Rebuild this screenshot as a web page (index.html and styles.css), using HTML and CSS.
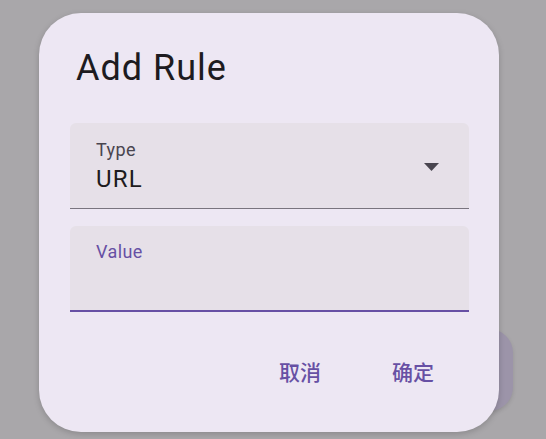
FILE: index.html
```html
<!DOCTYPE html>
<html>
<head>
<meta charset="utf-8">
<link rel="stylesheet" href="styles.css">
</head>
<body>
<div class="fab"></div>
<div class="dialog">
  <h1 class="title">Add Rule</h1>
  <div class="field field-select">
    <div class="field-text">
      <div class="label">Type</div>
      <div class="value">URL</div>
    </div>
    <svg class="caret" width="15" height="8" viewBox="0 0 15 8"><path d="M0 0 L15 0 L7.5 8 Z" fill="#49454f"/></svg>
  </div>
  <div class="field field-focused">
    <div class="label label-focused">Value</div>
  </div>
  <div class="actions">
    <button class="btn">取消</button>
    <button class="btn">确定</button>
  </div>
</div>
</body>
</html>
```

FILE: styles.css
```css
html, body {
  margin: 0;
  padding: 0;
}
body {
  width: 546px;
  height: 439px;
  background: #a9a7aa;
  font-family: Roboto, "Noto Sans CJK SC", sans-serif;
  position: relative;
  overflow: hidden;
  padding: 13px 0 0 39px;
  box-sizing: border-box;
}
.fab {
  position: absolute;
  left: 429px;
  top: 329px;
  width: 84px;
  height: 82px;
  border-radius: 24px;
  background: #9c94a9;
  box-shadow: 0 2px 4px rgba(0,0,0,0.12);
}
.dialog {
  position: relative;
  width: 460px;
  height: 419px;
  background: #ede7f3;
  border-radius: 42px;
  box-shadow: 0 2px 6px rgba(0,0,0,0.18);
  box-sizing: border-box;
  padding: 31px 30px 0 31px;
  display: flex;
  flex-direction: column;
}
.title {
  margin: 0 0 31px 6px;
  font-size: 36px;
  line-height: 48px;
  font-weight: 400;
  color: #1d1b20;
  letter-spacing: 1px;
}
.field {
  background: #e6e0e8;
  border-radius: 6px 6px 0 0;
  box-sizing: border-box;
  height: 86px;
  padding: 15px 30px 0 26px;
}
.field-select {
  display: flex;
  align-items: flex-start;
  border-bottom: 1px solid #79747e;
}
.field-text {
  flex: 1;
}
.caret {
  margin-top: 25px;
}
.field-focused {
  margin-top: 17px;
  padding-top: 14px;
  border-bottom: 2px solid #6750a4;
}
.label {
  font-size: 18px;
  line-height: 24px;
  color: #49454f;
  letter-spacing: 0.4px;
}
.label-focused {
  color: #6750a4;
}
.value {
  margin-top: 1px;
  font-size: 24px;
  line-height: 32px;
  color: #1d1b20;
  letter-spacing: 1.2px;
}
.actions {
  display: flex;
  justify-content: flex-end;
  gap: 35px;
  margin-top: 38px;
  padding-right: 17px;
}
.btn {
  border: none;
  background: transparent;
  padding: 0 18px;
  height: 42px;
  font-family: "Noto Sans CJK SC", sans-serif;
  font-size: 21px;
  font-weight: 500;
  color: #6750a4;
}
```
